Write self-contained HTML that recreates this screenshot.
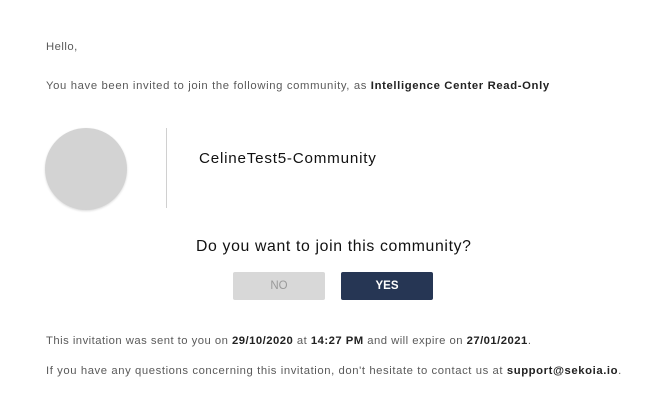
<!DOCTYPE html>
<html><head><meta charset="utf-8"><style>
body{margin:0;width:665px;height:401px;background:#fff;position:relative;overflow:hidden;font-family:"Liberation Sans",sans-serif;color:#5a5a5a}
.t{position:absolute;white-space:nowrap;font-size:11.3px;letter-spacing:0.47px;line-height:14px}
b{color:#222;font-weight:bold}
.circ{position:absolute;left:45px;top:128px;width:82px;height:82px;border-radius:50%;background:#d3d3d3;box-shadow:0 1px 2px rgba(0,0,0,.15)}
.vl{position:absolute;left:166px;top:128px;width:1px;height:80px;background:#d0d0d0}
.btn{position:absolute;top:272px;width:92px;height:28px;border-radius:2px;font-size:11.5px;font-weight:bold;text-align:center;line-height:28px}
</style></head><body>
<div class="t" style="left:46px;top:40px">Hello,</div>
<div class="t" style="left:46px;top:79px;letter-spacing:0.63px">You have been invited to join the following community, as <b>Intelligence Center Read-Only</b></div>
<div class="circ"></div>
<div class="vl"></div>
<div class="t" style="left:199px;top:150px;font-size:15.2px;color:#111;letter-spacing:0.78px;line-height:18px">CelineTest5-Community</div>
<div class="t" style="left:196px;top:238px;font-size:15.8px;color:#111;letter-spacing:0.65px;line-height:18px">Do you want to join this community?</div>
<div class="btn" style="left:233px;background:#d8d8d8;color:#9a9a9a;font-weight:normal">NO</div>
<div class="btn" style="left:341px;background:#263654;color:#fff">YES</div>
<div class="t" style="left:46px;top:334px">This invitation was sent to you on <b>29/10/2020</b> at <b>14:27 PM</b> and will expire on <b>27/01/2021</b>.</div>
<div class="t" style="left:46px;top:364px;letter-spacing:0.58px">If you have any questions concerning this invitation, don't hesitate to contact us at <b>support@sekoia.io</b>.</div>
</body></html>
